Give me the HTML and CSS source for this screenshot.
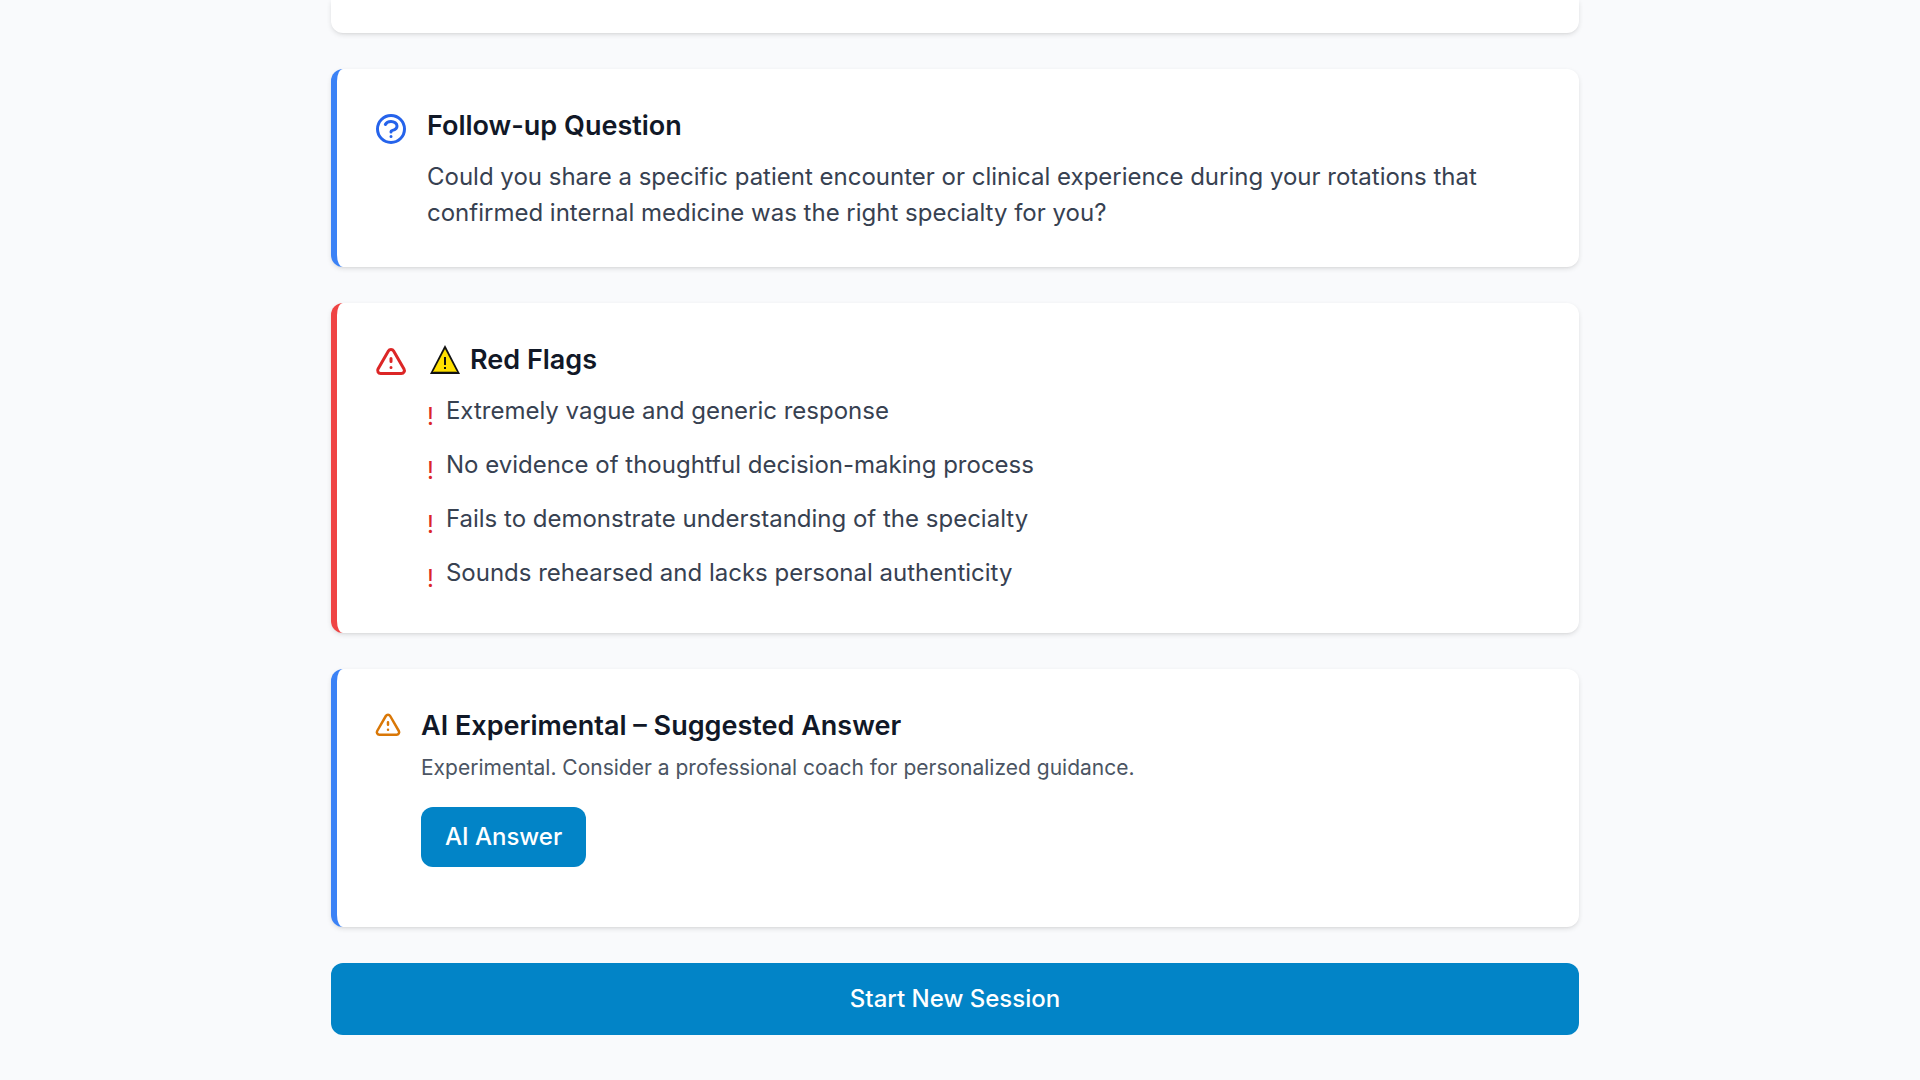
FILE: index.html
```html
<!DOCTYPE html>
<html lang="en">
<head>
<meta charset="utf-8">
<meta name="viewport" content="width=device-width, initial-scale=1">
<title>Session Feedback</title>
<link rel="stylesheet" href="styles.css">
</head>
<body>
<main class="page">
  <section class="card card-previous" aria-label="Previous feedback"></section>

  <section class="card card-blue">
    <svg class="icon icon-blue" viewBox="0 0 24 24" aria-hidden="true"><path d="M8.228 9c.549-1.165 2.03-2 3.772-2 2.21 0 4 1.343 4 3 0 1.4-1.278 2.575-3.006 2.907-.542.104-.994.54-.994 1.093m0 3h.01M21 12a9 9 0 11-18 0 9 9 0 0118 0z"/></svg>
    <div class="card-body">
      <h2 class="title">Follow-up Question</h2>
      <p class="text">Could you share a specific patient encounter or clinical experience during your rotations that confirmed internal medicine was the right specialty for you?</p>
    </div>
  </section>

  <section class="card card-red">
    <svg class="icon icon-red" viewBox="0 0 24 24" aria-hidden="true"><path d="M12 9v2m0 4h.01m-6.938 4h13.856c1.54 0 2.502-1.667 1.732-3L13.732 4c-.77-1.333-2.694-1.333-3.464 0L3.34 16c-.77 1.333.192 3 1.732 3z"/></svg>
    <div class="card-body">
      <h2 class="title title-sign">
        <svg class="sign" viewBox="0 0 30 30" aria-hidden="true"><path class="sign-edge" d="M15 0L30 29H0z"/><path class="sign-fill" d="M15 4L27 27H3z"/><path class="sign-shade" d="M3 26h24v1H3z"/><path class="sign-edge" d="M14 12h2v8h-2zM14 22h2v2h-2z"/></svg>
        Red Flags
      </h2>
      <ul class="flags">
        <li class="flag"><span class="bang">!</span><span>Extremely vague and generic response</span></li>
        <li class="flag"><span class="bang">!</span><span>No evidence of thoughtful decision-making process</span></li>
        <li class="flag"><span class="bang">!</span><span>Fails to demonstrate understanding of the specialty</span></li>
        <li class="flag"><span class="bang">!</span><span>Sounds rehearsed and lacks personal authenticity</span></li>
      </ul>
    </div>
  </section>

  <section class="card card-blue">
    <svg class="icon icon-small icon-amber" viewBox="0 0 24 24" aria-hidden="true"><path d="M12 9v2m0 4h.01m-6.938 4h13.856c1.54 0 2.502-1.667 1.732-3L13.732 4c-.77-1.333-2.694-1.333-3.464 0L3.34 16c-.77 1.333.192 3 1.732 3z"/></svg>
    <div class="card-body card-body-answer">
      <h2 class="title title-tight">AI Experimental – Suggested Answer</h2>
      <p class="note">Experimental. Consider a professional coach for personalized guidance.</p>
      <button class="button" type="button">AI Answer</button>
    </div>
  </section>

  <button class="button button-wide" type="button">Start New Session</button>
</main>
</body>
</html>
```
FILE: styles.css
```css
* {
  box-sizing: border-box;
}

body {
  margin: 0;
  padding-right: 10px;
  background: #f9fafc;
  color: #374151;
  font-family: Inter, "Liberation Sans", sans-serif;
  font-size: 24px;
  line-height: 36px;
}

h2,
p,
ul {
  margin: 0;
  padding: 0;
}

.page {
  display: flex;
  flex-direction: column;
  gap: 36px;
  max-width: 1344px;
  margin: 0 auto;
  padding: 0 48px 45px;
}

.card {
  display: flex;
  align-items: flex-start;
  gap: 18px;
  padding: 36px;
  border-radius: 12px;
  background: #fff;
  box-shadow: 0 2px 5px rgba(0, 0, 0, 0.1), 0 2px 3px -2px rgba(0, 0, 0, 0.1);
}

.card-previous {
  padding: 33px 0 0;
  border-radius: 0 0 12px 12px;
}

.card-blue {
  border-left: 6px solid #3b82f6;
}

.card-red {
  border-left: 6px solid #ef4444;
}

.card-body {
  flex: 1;
  min-width: 0;
}

.card-body-answer {
  padding-bottom: 24px;
}

.icon {
  flex: none;
  width: 36px;
  height: 36px;
  margin-top: 6px;
  fill: none;
  stroke: currentColor;
  stroke-width: 2;
  stroke-linecap: round;
  stroke-linejoin: round;
}

.icon-small {
  width: 30px;
  height: 30px;
}

.icon-blue {
  color: #2563eb;
}

.icon-red {
  color: #dc2626;
}

.icon-amber {
  color: #d97706;
}

.title {
  margin-bottom: 12px;
  color: #111827;
  font-size: 27px;
  font-weight: 600;
  line-height: 42px;
}

.title-tight {
  margin-bottom: 6px;
}

.title-sign {
  display: flex;
  align-items: center;
  gap: 10px;
  padding-left: 3px;
}

.sign {
  width: 30px;
  height: 30px;
}

.sign-edge {
  fill: #111;
}

.sign-fill {
  fill: #ffe000;
}

.sign-shade {
  fill: #b8a200;
}

.flags {
  display: flex;
  flex-direction: column;
  gap: 12px;
  list-style: none;
}

.flag {
  display: flex;
  align-items: flex-start;
  gap: 12px;
}

.bang {
  margin-top: 6px;
  color: #dc2626;
}

.note {
  color: #4b5563;
  font-size: 21px;
  line-height: 30px;
}

.button {
  display: block;
  margin: 24px 0 0;
  padding: 12px 24px;
  border: 0;
  border-radius: 12px;
  background: #0284c7;
  color: #fff;
  font: inherit;
  font-weight: 500;
  cursor: pointer;
}

.button-wide {
  width: 100%;
  margin: 0;
  padding: 18px 24px;
}
```
